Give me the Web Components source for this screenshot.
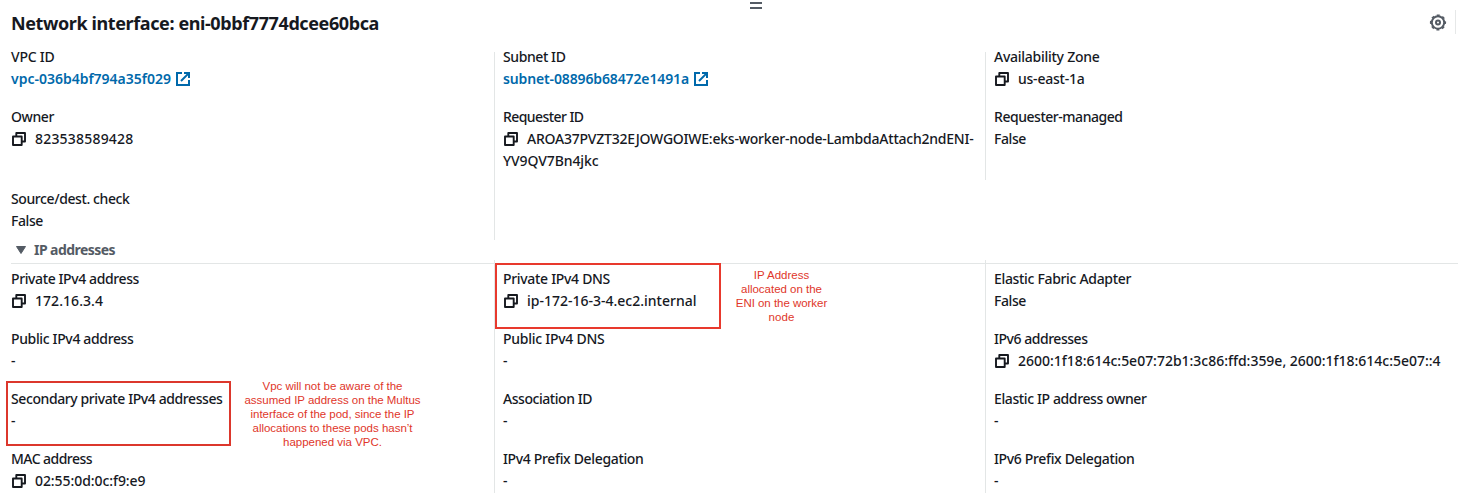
<!DOCTYPE html>
<html lang="en">
<head>
<meta charset="utf-8">
<title>Network interface</title>
<style>
body{margin:0;width:1458px;height:493px;overflow:hidden;background:#fff;color:#16191f;font:500 14px/22px "Noto Sans","Open Sans",sans-serif}
</style>
</head>
<body>
<eni-panel></eni-panel>
<script>
// Single line of text tracked to a given advance width.
customElements.define('fit-text', class extends HTMLElement {
  connectedCallback() {
    this.attachShadow({mode:'open'}).innerHTML = '<style>:host{display:inline-block;white-space:pre}</style><slot></slot>';
    const w = parseFloat(this.getAttribute('w'));
    if (w) this.style.letterSpacing = ((w - this.getBoundingClientRect().width) / this.textContent.length).toFixed(4) + 'px';
  }
});
const shapes = {
  copy: '<svg width="16" height="16" viewBox="0 0 16 16" fill="none" stroke="currentColor" stroke-width="1.900" stroke-linejoin="round"><path d="M2 5.500h8.700V14H2z"/><path d="M5.300 5.500V2H14v8.500h-3.300"/></svg>',
  external: '<svg width="16" height="16" viewBox="0 0 16 16" fill="none" stroke="currentColor" stroke-width="2"><path d="M7 2H2v12h12V9"/><path d="M9 2h5v5M13.600 2.400L6 10"/></svg>',
  gear: '<svg width="18" height="18" viewBox="0 0 18 18" fill="none" stroke="currentColor" stroke-width="2"><circle cx="9" cy="8.500" r="6.200"/><circle cx="9" cy="8.500" r="7.300" stroke-width="1.600" stroke-dasharray="2.900 2.833" stroke-dashoffset="1.450"/><circle cx="9" cy="8.500" r="2"/></svg>',
  caret: '<svg width="12" height="10" viewBox="0 0 12 10"><path fill="currentColor" stroke="currentColor" stroke-linejoin="round" d="M1.500 1.500h9L6 8.500z"/></svg>',
  grip: '<svg width="12" height="8" viewBox="0 0 12 8"><path fill="currentColor" d="M0 0h12v2H0zM0 5h12v2H0z"/></svg>'
};
customElements.define('ui-icon', class extends HTMLElement {
  connectedCallback() {
    this.attachShadow({mode:'open'}).innerHTML = '<style>:host{display:inline-flex}svg{display:block}</style>' + shapes[this.getAttribute('name')];
  }
});
customElements.define('kv-field', class extends HTMLElement {
  connectedCallback() {
    const a = n => this.getAttribute(n) || '';
    const kind = a('kind');
    const rest = a('rest');
    this.attachShadow({mode:'open'}).innerHTML = `<style>
      :host{display:block;margin-bottom:16px;white-space:nowrap}
      :host([tall]){margin-bottom:38px}
      div{height:22px;display:flex;align-items:center}
      .link{color:#0069ab;font-weight:600}
      .copy ui-icon{margin-right:8px}
      .link ui-icon{margin-left:4px}
      </style>
      <div><fit-text w="${a('lw')}">${a('label')}</fit-text></div>
      <div class="${kind}">${kind === 'copy' ? '<ui-icon name="copy"></ui-icon>' : ''}<fit-text w="${a('vw')}">${a('value')}</fit-text>${kind === 'link' ? '<ui-icon name="external"></ui-icon>' : ''}</div>
      ${rest ? `<div><fit-text w="${a('rw')}">${rest}</fit-text></div>` : ''}`;
  }
});
customElements.define('call-out', class extends HTMLElement {
  connectedCallback() {
    this.attachShadow({mode:'open'}).innerHTML = `<style>
      :host{position:absolute;display:flex;flex-direction:column;align-items:center;color:#e0362a;font:11.5px/14px "Liberation Sans",Arial,sans-serif}
      </style><slot></slot>`;
  }
});
customElements.define('eni-panel', class extends HTMLElement {
  connectedCallback() {
    this.attachShadow({mode:'open'}).innerHTML = `<style>
      :host{display:block;position:relative;width:1458px;height:493px;overflow:hidden}
      header{height:52px;box-sizing:border-box;padding:10px 2px 0 11px;display:flex;justify-content:space-between;align-items:flex-start}
      h1{margin:1px 0 0;font-size:18px;line-height:24px;font-weight:700}
      .tools{height:24px;box-sizing:border-box;padding-top:1px;display:flex;align-items:center;color:#545b64;border-right:1px solid #e6e8e8;padding-right:8px}
      .grip{position:absolute;left:750px;top:2px;color:#545b64}
      .cols{display:grid;grid-template-columns:494px 491px 1fr;align-items:start}
      .cols>div{box-sizing:border-box;padding-left:8px}
      .cols>div:first-child{padding-left:11px}
      .cols>div+div{border-left:1px solid #e3e6e6}
      .info{height:188px}
      .info>div{height:188px}
      .info>div:last-child{height:128px}
      .info kv-field:first-child{margin-top:-6px}
      h2{margin:0 0 0 11px;height:24px;box-sizing:border-box;border-bottom:1px solid #e3e6e6;padding:0 0 3px 4px;display:flex;align-items:center;gap:7px;color:#545b64;font-size:14px;font-weight:700;line-height:20px}
      .ips{margin-top:-4px}
      .ips>div{height:233px;padding-top:8px}
      .mark{position:absolute;box-sizing:border-box;border:2px solid #dc372c}
      </style>
      <header><h1><fit-text w="368">Network interface: eni-0bbf7774dcee60bca</fit-text></h1><div class="tools"><ui-icon name="gear"></ui-icon></div></header>
      <ui-icon class="grip" name="grip"></ui-icon>
      <section class="cols info">
        <div>
          <kv-field label="VPC ID" lw="43.500" value="vpc-036b4bf794a35f029" vw="160" kind="link"></kv-field>
          <kv-field tall label="Owner" lw="43" value="823538589428" vw="98.500" kind="copy"></kv-field>
          <kv-field label="Source/dest. check" lw="118.500" value="False" vw="32"></kv-field>
        </div>
        <div>
          <kv-field label="Subnet ID" lw="62.500" value="subnet-08896b68472e1491a" vw="186" kind="link"></kv-field>
          <kv-field label="Requester ID" lw="80.500" value="AROA37PVZT32EJOWGOIWE:eks-worker-node-LambdaAttach2ndENI-" vw="446.500" kind="copy" rest="YV9QV7Bn4jkc" rw="95.500"></kv-field>
        </div>
        <div>
          <kv-field label="Availability Zone" lw="105.500" value="us-east-1a" vw="66.500" kind="copy"></kv-field>
          <kv-field label="Requester-managed" lw="128.500" value="False" vw="32"></kv-field>
        </div>
      </section>
      <h2><ui-icon name="caret"></ui-icon><fit-text w="81">IP addresses</fit-text></h2>
      <section class="cols ips">
        <div>
          <kv-field label="Private IPv4 address" lw="128" value="172.16.3.4" vw="68" kind="copy"></kv-field>
          <kv-field label="Public IPv4 address" lw="122.500" value="-"></kv-field>
          <kv-field label="Secondary private IPv4 addresses" lw="211.500" value="-"></kv-field>
          <kv-field label="MAC address" lw="81" value="02:55:0d:0c:f9:e9" vw="110.500" kind="copy"></kv-field>
        </div>
        <div>
          <kv-field label="Private IPv4 DNS" lw="107" value="ip-172-16-3-4.ec2.internal" vw="169.500" kind="copy"></kv-field>
          <kv-field label="Public IPv4 DNS" lw="101.500" value="-"></kv-field>
          <kv-field label="Association ID" lw="89" value="-"></kv-field>
          <kv-field label="IPv4 Prefix Delegation" lw="140.500" value="-"></kv-field>
        </div>
        <div>
          <kv-field label="Elastic Fabric Adapter" lw="137" value="False" vw="32"></kv-field>
          <kv-field label="IPv6 addresses" lw="93.500" value="2600:1f18:614c:5e07:72b1:3c86:ffd:359e, 2600:1f18:614c:5e07::4" vw="422.500" kind="copy"></kv-field>
          <kv-field label="Elastic IP address owner" lw="152.500" value="-"></kv-field>
          <kv-field label="IPv6 Prefix Delegation" lw="140.500" value="-"></kv-field>
        </div>
      </section>
      <div class="mark" style="left:495px;top:263px;width:226px;height:66px;border-color:#e8392d"></div>
      <div class="mark" style="left:6px;top:381px;width:225px;height:65px"></div>
      <call-out style="left:732px;top:268px;width:99px"><fit-text w="55.500">IP Address</fit-text><fit-text w="81">allocated on the</fit-text><fit-text w="91.500">ENI on the worker</fit-text><fit-text w="26">node</fit-text></call-out>
      <call-out style="left:242px;top:379px;width:181px"><fit-text w="140">Vpc will not be aware of the</fit-text><fit-text w="176">assumed IP address on the Multus</fit-text><fit-text w="164">interface of the pod, since the IP</fit-text><fit-text w="160">allocations to these pods hasn’t</fit-text><fit-text w="99">happened via VPC.</fit-text></call-out>`;
  }
});
</script>
</body>
</html>
